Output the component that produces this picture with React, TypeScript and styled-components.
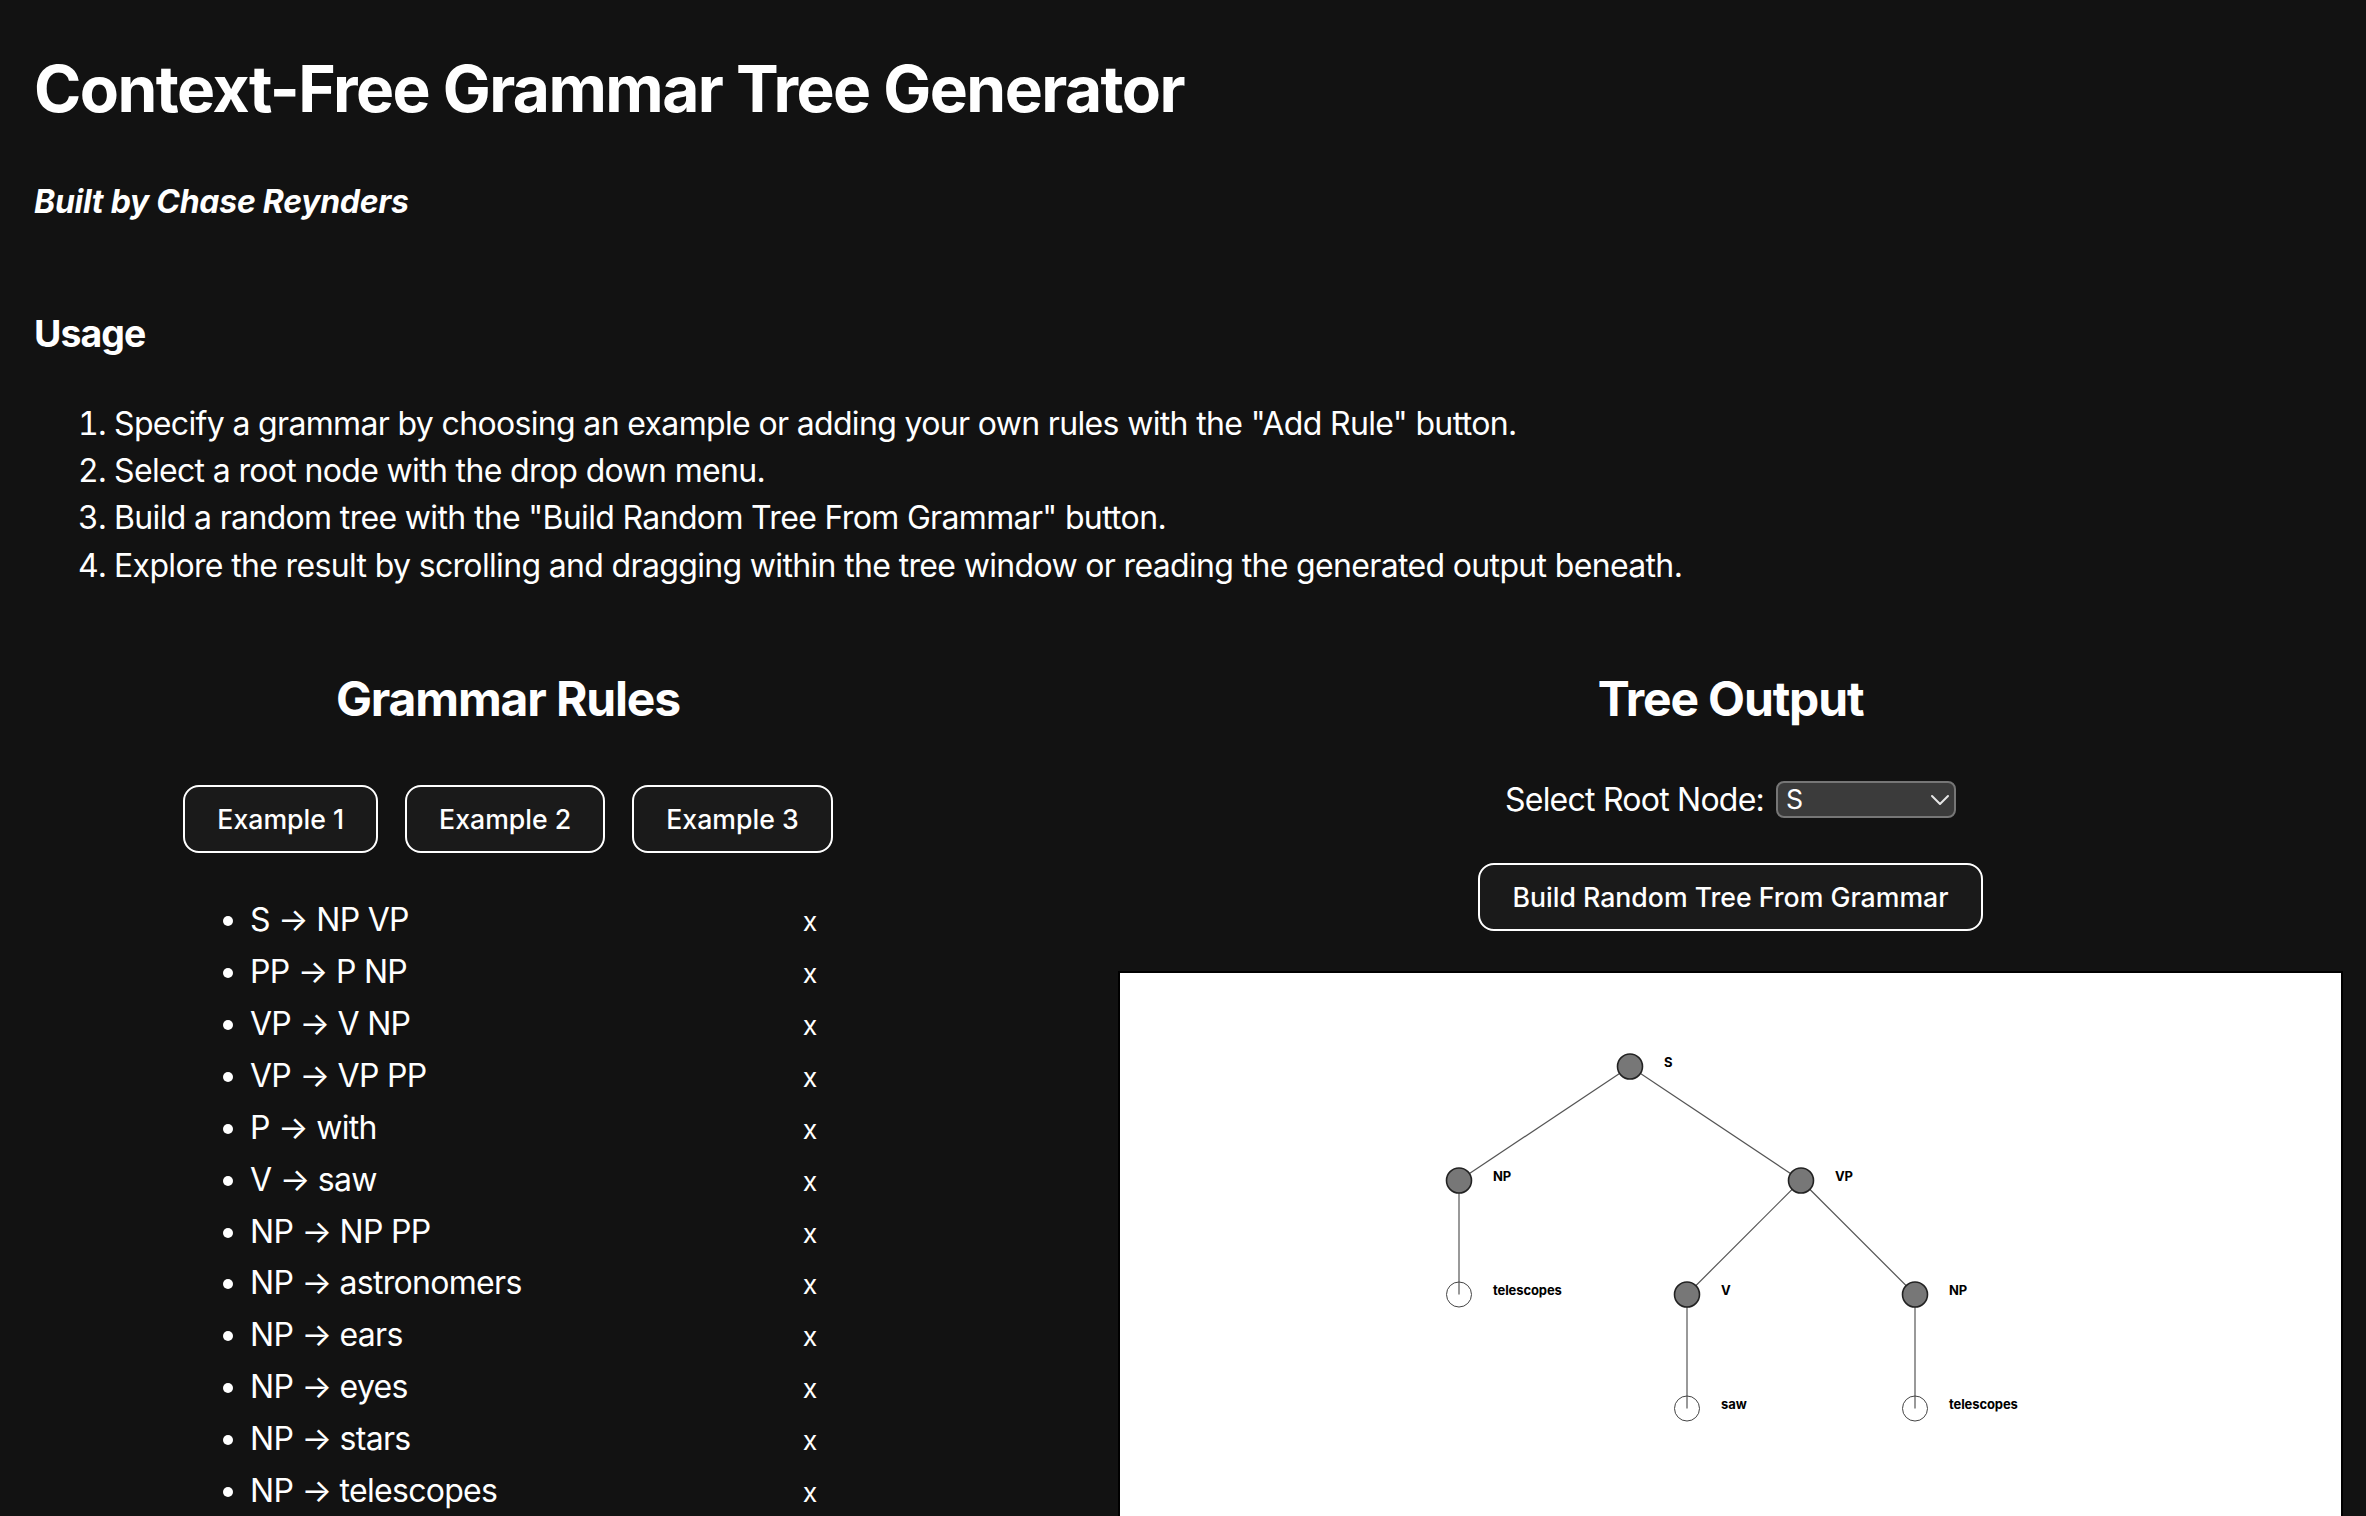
import React from 'react'
import styled, { createGlobalStyle } from 'styled-components'
import { ChevronDown } from 'lucide-react'

type TreeNode = { name: string; children?: TreeNode[] }
type PlacedNode = { id: string; name: string; x: number; y: number; leaf: boolean }
type Link = { id: string; x1: number; y1: number; x2: number; y2: number }

const RULES = [
  ['S', 'NP VP'],
  ['PP', 'P NP'],
  ['VP', 'V NP'],
  ['VP', 'VP PP'],
  ['P', 'with'],
  ['V', 'saw'],
  ['NP', 'NP PP'],
  ['NP', 'astronomers'],
  ['NP', 'ears'],
  ['NP', 'eyes'],
  ['NP', 'stars'],
  ['NP', 'telescopes'],
]

const TREE: TreeNode = {
  name: 'S',
  children: [
    { name: 'NP', children: [{ name: 'telescopes' }] },
    {
      name: 'VP',
      children: [
        { name: 'V', children: [{ name: 'saw' }] },
        { name: 'NP', children: [{ name: 'telescopes' }] },
      ],
    },
  ],
}

const ORIGIN_X = 339
const ORIGIN_Y = 93.5
const SIBLING_GAP = 228
const LEVEL_GAP = 114

// leaves get evenly spaced slots, parents sit over the middle of their children
const layoutTree = (root: TreeNode) => {
  const nodes: PlacedNode[] = []
  const links: Link[] = []
  let leafIndex = 0

  const place = (node: TreeNode, depth: number, id: string): PlacedNode => {
    const y = ORIGIN_Y + depth * LEVEL_GAP
    if (!node.children || node.children.length === 0) {
      const placed = { id, name: node.name, x: ORIGIN_X + leafIndex * SIBLING_GAP, y, leaf: true }
      leafIndex += 1
      nodes.push(placed)
      return placed
    }
    const kids = node.children.map((child, i) => place(child, depth + 1, `${id}-${i}`))
    const x = kids.reduce((sum, k) => sum + k.x, 0) / kids.length
    const placed = { id, name: node.name, x, y, leaf: false }
    kids.forEach((k) => links.push({ id: `${id}>${k.id}`, x1: x, y1: y, x2: k.x, y2: k.y }))
    nodes.push(placed)
    return placed
  }

  place(root, 0, 'n')
  return { nodes, links }
}

const GlobalStyle = createGlobalStyle`
  * {
    box-sizing: border-box;
  }

  html,
  body {
    margin: 0;
    padding: 0;
    background: #121212;
    overflow: hidden;
  }

  body {
    font-family: Inter, 'Noto Sans', sans-serif;
    color: #ffffff;
  }
`

const Page = styled.div`
  padding: 0 23px 0 34px;
`

const Title = styled.h1`
  margin: 50px 0 0;
  font-size: 64px;
  line-height: 78px;
  font-weight: 700;
  letter-spacing: -0.024em;
`

const Byline = styled.p`
  margin: 53.7px 0 0;
  font-size: 32px;
  line-height: 40px;
  font-weight: 700;
  font-style: italic;
  letter-spacing: -0.27px;
`

const UsageHeading = styled.h3`
  margin: 89.7px 0 0;
  font-size: 37.4px;
  line-height: 46px;
  font-weight: 700;
  letter-spacing: -0.024em;
`

const Steps = styled.ol`
  margin: 42.3px 0 0;
  padding-left: 80px;
  font-size: 32px;
  line-height: 47.4px;
  letter-spacing: -0.0205em;
`

const Columns = styled.div`
  display: grid;
  grid-template-columns: 948px 1225px;
  column-gap: 136px;
  align-items: start;
  margin-top: 81.2px;
`

const Column = styled.section`
  display: flex;
  flex-direction: column;
  align-items: center;
`

const SectionHeading = styled.h2`
  margin: 0;
  font-size: 48px;
  line-height: 58px;
  font-weight: 700;
  text-align: center;
  letter-spacing: -0.024em;
`

const ExampleRow = styled.div`
  display: flex;
  gap: 27px;
  margin-top: 56.5px;
`

const OutlineButton = styled.button<{ $top?: number }>`
  margin-top: ${({ $top }) => $top ?? 0}px;
  padding: 16px 32px;
  border: 2px solid #ffffff;
  border-radius: 16px;
  background: #1a1a1a;
  color: #ffffff;
  font-family: inherit;
  font-size: 26.67px;
  line-height: 32px;
  font-weight: 500;
  cursor: pointer;
`

const RuleList = styled.ul`
  width: 676px;
  margin: 41.5px 0 0;
  padding-left: 80px;
  list-style: disc;
`

const RuleItem = styled.li`
  height: 51.85px;
  font-size: 32px;
  line-height: 51.85px;
`

const RuleRow = styled.div`
  display: flex;
  align-items: baseline;
`

const RuleText = styled.span`
  flex: 1;
  letter-spacing: -0.022em;
`

const RemoveButton = styled.button`
  width: 72px;
  padding: 0;
  border: none;
  background: none;
  color: #ffffff;
  font-family: inherit;
  font-size: 26.67px;
  line-height: 51.85px;
  text-align: center;
  cursor: pointer;
`

const SelectRow = styled.div`
  display: flex;
  align-items: center;
  gap: 12px;
  height: 48px;
  margin-top: 47.6px;
  font-size: 32px;
  line-height: 48px;
`

const SelectLabel = styled.span`
  letter-spacing: -0.024em;
`

const SelectWrap = styled.div`
  position: relative;
  width: 180px;
  height: 37px;
  margin-top: -1.5px;
`

const RootSelect = styled.select`
  appearance: none;
  display: block;
  width: 100%;
  height: 100%;
  padding: 0 0 0 8px;
  border: 2px solid #767676;
  border-radius: 8px;
  background: #3b3b3b;
  color: #ffffff;
  font-family: inherit;
  font-size: 26.67px;
`

const Chevron = styled(ChevronDown)`
  position: absolute;
  top: 3px;
  right: 0;
  color: #e6e6e6;
  pointer-events: none;
`

const TreeBox = styled.div`
  align-self: stretch;
  height: 1100px;
  margin-top: 40px;
  border: 2px solid #000000;
  background: #ffffff;
`

const TreeCanvas = styled.svg`
  display: block;
  width: 100%;
  height: 100%;
`

const NodeLabel = styled.text`
  font-family: Inter, 'Noto Sans', sans-serif;
  font-size: 13px;
  font-weight: 700;
  letter-spacing: -0.1px;
  fill: #000000;
`

const TreeView = () => {
  const { nodes, links } = layoutTree(TREE)
  return (
    <TreeCanvas>
      {links.map((l) => (
        <line key={l.id} x1={l.x1} y1={l.y1} x2={l.x2} y2={l.y2} stroke="#555555" strokeWidth={1.2} />
      ))}
      {nodes.map((n) => (
        <g key={n.id} transform={`translate(${n.x}, ${n.y})`}>
          {n.leaf ? (
            <circle r={12.5} fill="none" stroke="#444444" strokeWidth={1} />
          ) : (
            <circle r={12.5} fill="#777777" stroke="#222222" strokeWidth={1.6} />
          )}
          <NodeLabel x={34} y={0}>
            {n.name}
          </NodeLabel>
        </g>
      ))}
    </TreeCanvas>
  )
}

const App = () => {
  return (
    <Page>
      <GlobalStyle />
      <Title>Context-Free Grammar Tree Generator</Title>
      <Byline>Built by Chase Reynders</Byline>
      <UsageHeading>Usage</UsageHeading>
      <Steps>
        <li>Specify a grammar by choosing an example or adding your own rules with the "Add Rule" button.</li>
        <li>Select a root node with the drop down menu.</li>
        <li>Build a random tree with the "Build Random Tree From Grammar" button.</li>
        <li>Explore the result by scrolling and dragging within the tree window or reading the generated output beneath.</li>
      </Steps>
      <Columns>
        <Column>
          <SectionHeading>Grammar Rules</SectionHeading>
          <ExampleRow>
            <OutlineButton>Example 1</OutlineButton>
            <OutlineButton>Example 2</OutlineButton>
            <OutlineButton>Example 3</OutlineButton>
          </ExampleRow>
          <RuleList>
            {RULES.map(([lhs, rhs], i) => (
              <RuleItem key={i}>
                <RuleRow>
                  <RuleText>
                    {lhs} → {rhs}
                  </RuleText>
                  <RemoveButton>x</RemoveButton>
                </RuleRow>
              </RuleItem>
            ))}
          </RuleList>
        </Column>
        <Column>
          <SectionHeading>Tree Output</SectionHeading>
          <SelectRow>
            <SelectLabel>Select Root Node:</SelectLabel>
            <SelectWrap>
              <RootSelect defaultValue="S">
                <option value="S">S</option>
                <option value="NP">NP</option>
                <option value="VP">VP</option>
                <option value="PP">PP</option>
                <option value="P">P</option>
                <option value="V">V</option>
              </RootSelect>
              <Chevron size={32} strokeWidth={1.5} />
            </SelectWrap>
          </SelectRow>
          <OutlineButton $top={38.9}>Build Random Tree From Grammar</OutlineButton>
          <TreeBox>
            <TreeView />
          </TreeBox>
        </Column>
      </Columns>
    </Page>
  )
}

export default App
